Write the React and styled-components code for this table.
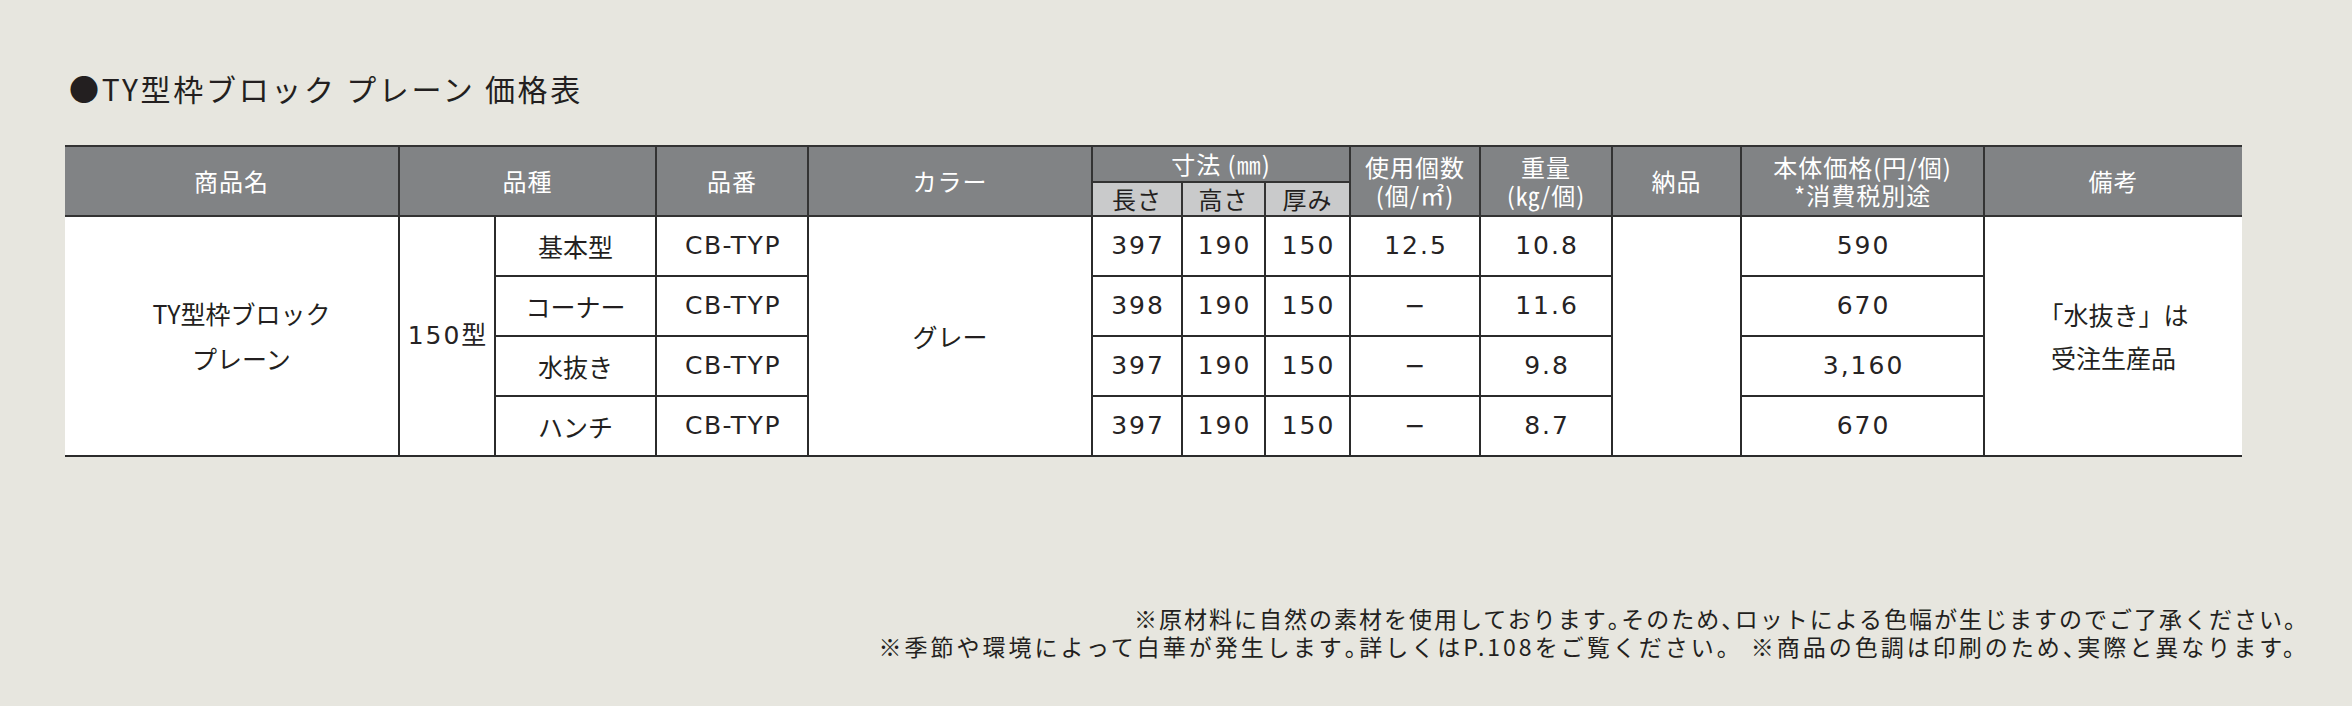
import React from "react";
import styled, { createGlobalStyle } from "styled-components";

const GlobalStyle = createGlobalStyle`
  html, body {
    margin: 0;
    padding: 0;
    background: #e7e6df;
  }
  body {
    font-family: "Noto Sans CJK JP", "Noto Sans", sans-serif;
    color: #231f20;
  }
`;

const Page = styled.div`
  width: 2352px;
  height: 706px;
  box-sizing: border-box;
  padding: 70px 0 0 65px;
  display: flex;
  flex-direction: column;
  overflow: hidden;
`;

const Title = styled.h1`
  margin: 0 0 0 4px;
  font-size: 30px;
  font-weight: 400;
  line-height: 36px;
  letter-spacing: 2.7px;
`;

const Table = styled.table`
  margin-top: 39px;
  width: 2177px;
  border-collapse: collapse;
  table-layout: fixed;
  background: #fff;
  border-top: 2px solid #2b2b2b;
  border-bottom: 2px solid #2b2b2b;
  border-left: hidden;
  border-right: hidden;
`;

const Col = styled.col`
  width: ${(p) => p.$w}px;
`;

const Head = styled.th`
  background: ${(p) => (p.$sub ? "#c9cacb" : "#818385")};
  color: ${(p) => (p.$sub ? "#231f20" : "#fff")};
  border: 2px solid #333;
  height: ${(p) => p.$h || 34}px;
  padding: 0;
  font-size: 24px;
  font-weight: 400;
  line-height: 28px;
  letter-spacing: 1px;
  text-align: center;
  vertical-align: middle;
  white-space: nowrap;
`;

const HeadLine = styled.span`
  display: block;
  line-height: 28px;
`;

const Cell = styled.td`
  border: 2px solid #2b2b2b;
  height: 58px;
  padding: 0 0 0 ${(p) => p.$pl || 0}px;
  font-size: 25px;
  line-height: ${(p) => p.$lh || 30}px;
  text-align: center;
  vertical-align: middle;
  white-space: nowrap;
`;

const Num = styled(Cell)`
  font-family: "DejaVu Sans", "Noto Sans CJK JP", sans-serif;
  font-weight: 400;
  letter-spacing: 2px;
  text-indent: 2px;
  color: #262324;
`;

const Code = styled(Num)`
  letter-spacing: 1.5px;
`;

const Notes = styled.div`
  margin-top: 147px;
  padding-right: 43px;
  display: flex;
  flex-direction: column;
  align-items: flex-end;
  font-size: 23px;
`;

const NoteLine = styled.div`
  line-height: 28px;
  letter-spacing: ${(p) => p.$ls}px;
  white-space: nowrap;
`;

const Punct = styled.span`
  font-feature-settings: "halt" 1;
`;

const cols = [334, 96, 161, 152, 284, 90, 83, 85, 130, 132, 129, 243, 258];

const rows = [
  { kind: "基本型", len: "397", h: "190", t: "150", use: "12.5", kg: "10.8", price: "590" },
  { kind: "コーナー", len: "398", h: "190", t: "150", use: "−", kg: "11.6", price: "670" },
  { kind: "水抜き", len: "397", h: "190", t: "150", use: "−", kg: "9.8", price: "3,160" },
  { kind: "ハンチ", len: "397", h: "190", t: "150", use: "−", kg: "8.7", price: "670" },
];

export default function App() {
  return (
    <Page>
      <GlobalStyle />
      <Title>●TY型枠ブロック プレーン 価格表</Title>
      <Table>
        <colgroup>
          {cols.map((w, i) => (
            <Col key={i} $w={w} />
          ))}
        </colgroup>
        <thead>
          <tr>
            <Head rowSpan={2}>商品名</Head>
            <Head rowSpan={2} colSpan={2}>品種</Head>
            <Head rowSpan={2}>品番</Head>
            <Head rowSpan={2}>カラー</Head>
            <Head colSpan={3} $h={34}>寸法 (㎜)</Head>
            <Head rowSpan={2}>
              <HeadLine>使用個数</HeadLine>
              <HeadLine>(個/㎡)</HeadLine>
            </Head>
            <Head rowSpan={2}>
              <HeadLine>重量</HeadLine>
              <HeadLine>(㎏/個)</HeadLine>
            </Head>
            <Head rowSpan={2}>納品</Head>
            <Head rowSpan={2}>
              <HeadLine>本体価格(円/個)</HeadLine>
              <HeadLine>*消費税別途</HeadLine>
            </Head>
            <Head rowSpan={2}>備考</Head>
          </tr>
          <tr>
            <Head $sub $h={32}>長さ</Head>
            <Head $sub $h={32}>高さ</Head>
            <Head $sub $h={32}>厚み</Head>
          </tr>
        </thead>
        <tbody>
          {rows.map((r, i) => (
            <tr key={r.kind}>
              {i === 0 && (
                <Cell rowSpan={4} $pl={20} $lh={45}>
                  TY型枠ブロック<br />プレーン
                </Cell>
              )}
              {i === 0 && <Num rowSpan={4}>150型</Num>}
              <Cell>{r.kind}</Cell>
              <Code>CB-TYP</Code>
              {i === 0 && <Cell rowSpan={4}>グレー</Cell>}
              <Num>{r.len}</Num>
              <Num>{r.h}</Num>
              <Num>{r.t}</Num>
              <Num>{r.use}</Num>
              <Num>{r.kg}</Num>
              {i === 0 && <Cell rowSpan={4} />}
              <Num>{r.price}</Num>
              {i === 0 && (
                <Cell rowSpan={4} $lh={43}>
                  「水抜き」は<br />受注生産品
                </Cell>
              )}
            </tr>
          ))}
        </tbody>
      </Table>
      <Notes>
        <NoteLine $ls={2}>
          ※原材料に自然の素材を使用しております<Punct>。</Punct>そのため<Punct>、</Punct>ロットによる色幅が生じますのでご了承ください。
        </NoteLine>
        <NoteLine $ls={3}>
          ※季節や環境によって白華が発生します<Punct>。</Punct>詳しくはP.108をご覧ください。 ※商品の色調は印刷のため<Punct>、</Punct>実際と異なります。
        </NoteLine>
      </Notes>
    </Page>
  );
}
